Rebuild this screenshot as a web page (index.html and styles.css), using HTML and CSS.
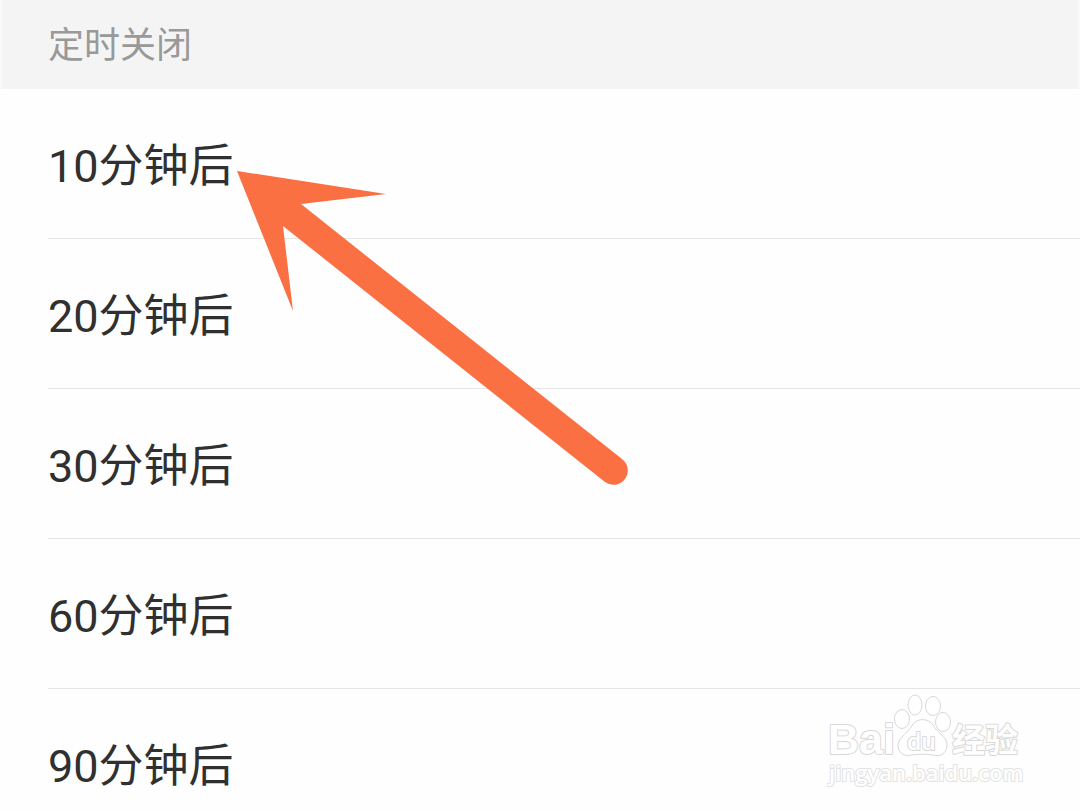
FILE: index.html
```html
<!DOCTYPE html>
<html lang="zh-CN">
<head>
  <meta charset="utf-8">
  <meta name="viewport" content="width=device-width, initial-scale=1">
  <title>定时关闭</title>
  <link rel="stylesheet" href="styles.css">
</head>
<body>
  <header>
    <h1>定时关闭</h1>
  </header>
  <main>
    <ul class="options">
      <li><button type="button">10分钟后</button></li>
      <li><button type="button">20分钟后</button></li>
      <li><button type="button">30分钟后</button></li>
      <li><button type="button">60分钟后</button></li>
      <li><button type="button">90分钟后</button></li>
    </ul>
  </main>

  <svg class="arrow" width="392" height="316" viewBox="0 0 392 316" aria-hidden="true">
    <path d="M0 0 L149 23 L64 33 L385 288 A14 14 0 0 1 368 311 L46 55 L56 140 Z"/>
  </svg>

  <svg class="watermark" width="200" height="100" viewBox="0 0 200 100">
    <text class="logo" x="1" y="61">Bai</text>
    <!-- paw -->
    <g class="paw">
      <ellipse cx="75" cy="26" rx="7.5" ry="9.5"/>
      <ellipse cx="88" cy="12" rx="7" ry="10"/>
      <ellipse cx="106" cy="13" rx="7.5" ry="9.5"/>
      <ellipse cx="116" cy="29" rx="7.5" ry="9.5"/>
      <path d="M86 31 C91 25 101 25 106 32 C110 40 121 44 120 53 C119 61 113 64 106 62 C99 61 92 61 85 62 C77 64 71 60 71 52 C72 44 82 39 86 31 Z"/>
    </g>
    <text class="du" x="80" y="57">du</text>
    <text class="jingyan" x="125" y="59">经验</text>
    <text class="site" x="2" y="88">jingyan.baidu.com</text>
  </svg>
</body>
</html>
```

FILE: styles.css
```css
* {
  box-sizing: border-box;
}
body {
  position: relative;
  margin: 0;
  background: #fefefe;
  color: #303030;
  font-family: Roboto, "Noto Sans CJK SC", sans-serif;
}
header {
  padding: 20px 46px 16px;
  border: solid #f9f9f9;
  border-width: 0 2px;
  background: #f4f4f4;
}
h1 {
  margin: 0;
  color: #999;
  font-size: 36px;
  font-weight: 400;
  line-height: 53px;
}
.options {
  margin: 0;
  padding: 0 0 0 48px;
  list-style: none;
}
.options li {
  border-bottom: 1px solid #e5e5e5;
}
.options button {
  display: block;
  width: 100%;
  padding: 45px 0 39px;
  border: 0;
  background: none;
  color: inherit;
  font: inherit;
  font-size: 45px;
  line-height: 65px;
  text-align: left;
}
.arrow {
  position: absolute;
  top: 171px;
  left: 237px;
  fill: #fb7042;
  pointer-events: none;
}
.watermark {
  position: absolute;
  top: 693px;
  right: 53px;
  fill: #fff;
  stroke: #d8d8d8;
  stroke-width: 1px;
  pointer-events: none;
}
.watermark text {
  font-family: "Liberation Sans", "Noto Sans CJK SC", sans-serif;
  stroke-width: 2px;
  stroke-linejoin: round;
  paint-order: stroke;
}
.watermark .logo {
  font-size: 43px;
  font-weight: 700;
}
.watermark .du {
  font-family: "Open Sans", sans-serif;
  font-size: 23px;
  font-weight: 600;
}
.watermark .jingyan {
  font-size: 33px;
  font-weight: 700;
}
.watermark .site {
  font-family: "Open Sans", sans-serif;
  font-size: 22px;
  font-weight: 600;
  stroke: #e2e2e2;
}
```
